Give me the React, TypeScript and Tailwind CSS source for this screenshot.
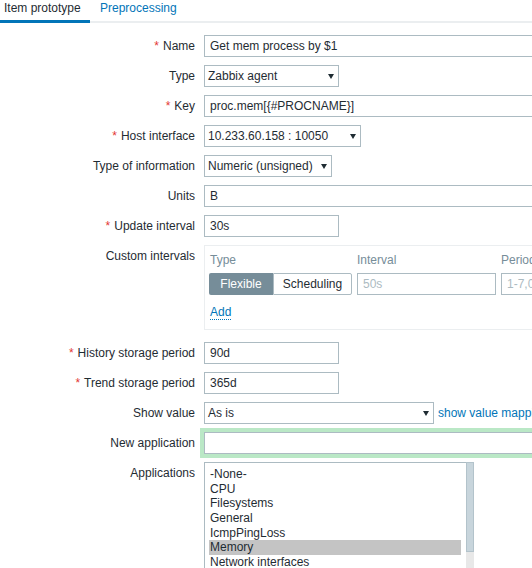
import React from "react";

const Arrow = () => (
  <svg width="6" height="5" viewBox="0 0 6 5" className="shrink-0">
    <path d="M0 0H6L3 5Z" fill="#1f2c33" />
  </svg>
);

function Row({
  label,
  req,
  children,
  mb = "mb-[8px]",
}: {
  label: string;
  req?: boolean;
  children: React.ReactNode;
  mb?: string;
}) {
  return (
    <div className={"flex " + mb}>
      <div className="w-[204px] shrink-0 pr-[9px] text-right leading-[22px] whitespace-nowrap">
        {req && <span className="text-[#e33734] mr-[4px]">*</span>}
        {label}
      </div>
      <div className="flex-1 min-w-0">{children}</div>
    </div>
  );
}

function TextInput({ value, w }: { value: string; w: string }) {
  return (
    <div
      className={
        "h-[22px] shrink-0 border border-[#acbbc2] bg-white pl-[5px] leading-[20px] whitespace-nowrap " +
        w
      }
    >
      {value}
    </div>
  );
}

function Select({ value, w }: { value: string; w: string }) {
  return (
    <div
      className={
        "h-[22px] shrink-0 border border-[#acbbc2] bg-white pl-[3px] pr-[4px] flex items-center justify-between whitespace-nowrap " +
        w
      }
    >
      <span className="leading-[20px]">{value}</span>
      <Arrow />
    </div>
  );
}

const apps = [
  "-None-",
  "CPU",
  "Filesystems",
  "General",
  "IcmpPingLoss",
  "Memory",
  "Network interfaces",
  "OS",
];

export default function App() {
  return (
    <div className="w-[532px] h-[568px] overflow-hidden bg-white text-[12px] text-[#1f2c33] font-['Liberation_Sans',Arial,sans-serif]">
      {/* Tabs */}
      <div className="flex h-[23px]">
        <div className="w-[90px] pl-[4px] border-b-[3px] border-[#0275b8] leading-[16px] whitespace-nowrap">
          Item prototype
        </div>
        <div className="px-[10px] border-b-[2px] border-[#ebeef0] text-[#0275b8] leading-[16px] whitespace-nowrap">
          Preprocessing
        </div>
        <div className="flex-1 border-b-[2px] border-[#ebeef0]" />
      </div>

      <div className="pt-[12px]">
        <Row label="Name" req>
          <TextInput value="Get mem process by $1" w="w-[400px]" />
        </Row>
        <Row label="Type">
          <Select value="Zabbix agent" w="w-[135px]" />
        </Row>
        <Row label="Key" req>
          <TextInput value="proc.mem[{#PROCNAME}]" w="w-[400px]" />
        </Row>
        <Row label="Host interface" req>
          <Select value="10.233.60.158 : 10050" w="w-[157px]" />
        </Row>
        <Row label="Type of information">
          <Select value="Numeric (unsigned)" w="w-[128px]" />
        </Row>
        <Row label="Units">
          <TextInput value="B" w="w-[400px]" />
        </Row>
        <Row label="Update interval" req>
          <TextInput value="30s" w="w-[135px]" />
        </Row>
        <Row label="Custom intervals" mb="mb-[12px]">
          <div className="w-[500px] h-[85px] border border-[#ebeef0] pt-[5px] pl-[4px]">
            <div className="flex gap-[5px] leading-[18px] text-[#768d99]">
              <div className="w-[143px] shrink-0 pl-[1px]">Type</div>
              <div className="w-[139px] shrink-0">Interval</div>
              <div className="w-[139px] shrink-0">Period</div>
            </div>
            <div className="flex gap-[5px] mt-[4px]">
              <div className="w-[143px] shrink-0 h-[22px] flex">
                <div className="w-[64px] h-[22px] bg-[#768d99] text-white rounded-l-[2px] flex items-center justify-center">
                  Flexible
                </div>
                <div className="w-[79px] h-[22px] bg-white border border-[#acbbc2] rounded-r-[2px] flex items-center justify-center">
                  Scheduling
                </div>
              </div>
              <div className="w-[139px] shrink-0 h-[22px] border border-[#acbbc2] pl-[5px] leading-[20px] text-[#acbbc2]">
                50s
              </div>
              <div className="w-[139px] shrink-0 h-[22px] border border-[#acbbc2] pl-[5px] leading-[20px] text-[#acbbc2] whitespace-nowrap">
                1-7,00:00-24:00
              </div>
            </div>
            <div className="mt-[8px] pl-[1px]">
              <span className="inline-block leading-[14px] text-[#0275b8] border-b border-dotted border-[#0275b8]">
                Add
              </span>
            </div>
          </div>
        </Row>
        <Row label="History storage period" req>
          <TextInput value="90d" w="w-[135px]" />
        </Row>
        <Row label="Trend storage period" req>
          <TextInput value="365d" w="w-[135px]" />
        </Row>
        <Row label="Show value">
          <div className="flex items-center">
            <Select value="As is" w="w-[230px]" />
            <span className="ml-[4px] text-[#0275b8] whitespace-nowrap">
              show value mappings
            </span>
          </div>
        </Row>
        <Row label="New application">
          <div className="w-[400px] h-[22px] border border-[#acbbc2] bg-white shadow-[0_0_0_4px_#bae8c6]" />
        </Row>
        <Row label="Applications">
          <div className="flex h-[140px]">
            <div className="w-[262px] border-l border-t border-[#acbbc2] pt-[4px] pl-[4px] pr-[5px]">
              {apps.map((a) => (
                <div
                  key={a}
                  className={
                    "h-[14.67px] leading-[14.67px] pl-[1px] whitespace-nowrap " +
                    (a === "Memory" ? "bg-[#c4c4c4]" : "")
                  }
                >
                  {a}
                </div>
              ))}
            </div>
            <div className="w-[8px] flex flex-col">
              <div className="h-[90px] bg-[#c8d5dc] border border-[#b3c3cb]" />
              <div className="flex-1 bg-[#e8e8e8]" />
            </div>
          </div>
        </Row>
      </div>
    </div>
  );
}
